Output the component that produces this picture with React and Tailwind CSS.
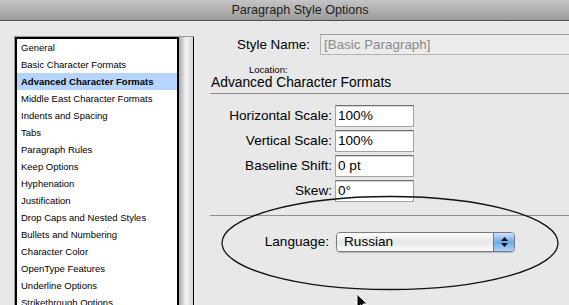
import React from 'react';

const items = [
  'General',
  'Basic Character Formats',
  'Advanced Character Formats',
  'Middle East Character Formats',
  'Indents and Spacing',
  'Tabs',
  'Paragraph Rules',
  'Keep Options',
  'Hyphenation',
  'Justification',
  'Drop Caps and Nested Styles',
  'Bullets and Numbering',
  'Character Color',
  'OpenType Features',
  'Underline Options',
  'Strikethrough Options',
];

const fields = [
  ['Horizontal Scale:', '100%'],
  ['Vertical Scale:', '100%'],
  ['Baseline Shift:', '0 pt'],
  ['Skew:', '0°'],
];

export default function App() {
  return (
    <div className="relative w-[569px] h-[305px] overflow-hidden bg-[#e8e8e8] text-black font-['Liberation_Sans',sans-serif]">
      {/* title bar */}
      <div className="h-[21px] border-b border-[#4e4e4e] bg-gradient-to-b from-[#c4c4c4] to-[#9c9c9c] pl-[31px] text-center text-[12.6px] leading-[20px] text-[#1e1e1e]">
        Paragraph Style Options
      </div>

      <div className="flex">
        {/* category list */}
        <div className="pl-[14px] pt-[15px]">
          <div className="flex border-t border-l border-[#9a9a9a] h-[300px]">
            <div className="w-[164px] border-l-2 border-r-2 border-t-2 border-black bg-white">
              {items.map((label, i) => (
                <div
                  key={label}
                  className={
                    i === 2
                      ? 'h-[17px] pl-[4px] text-[9.5px] leading-[17px] whitespace-nowrap bg-[#b5d5fd] font-bold'
                      : 'h-[17px] pl-[4px] text-[9.5px] leading-[17px] whitespace-nowrap'
                  }
                >
                  {label}
                </div>
              ))}
            </div>
            <div className="w-[14px] bg-gradient-to-r from-[#a9a9a9] via-[#f4f4f4] to-[#d4d4d4]" />
            <div className="w-px bg-black" />
          </div>
        </div>

        {/* options pane */}
        <div className="w-[400px] shrink-0">
          <div className="flex items-center mt-[13px]">
            <div className="w-[116px] text-right text-[13.4px] leading-[16px]">Style Name:</div>
            <div className="ml-[10px] h-[21px] w-[260px] border border-[#b4b4b4] border-t-[#9c9c9c] bg-[#ebebeb] pl-[3px] text-[13.4px] leading-[19px] text-[#8a8a8a]">
              [Basic Paragraph]
            </div>
          </div>
          <div className="ml-[55px] mt-[9px] h-[11px] text-[9.5px] leading-[11px]">Location:</div>
          <div className="ml-[17px] mt-[1px] h-[13px] text-[13.8px] leading-[13px]">Advanced Character Formats</div>
          <div className="ml-[16px] mt-[4px] border-t border-[#8e8e8e]" />

          <div className="mt-[11px] flex flex-col gap-[3px]">
            {fields.map(([label, value]) => (
              <div key={label} className="flex items-center">
                <div className="w-[138px] text-right text-[13.6px] leading-[16px]">{label}</div>
                <div className="ml-[3px] h-[22px] w-[79px] border border-[#a2a2a2] border-t-[#6f6f6f] bg-white pl-[2px] text-[13.6px] leading-[20px] shadow-[inset_0_1px_0_#d8d8d8]">
                  {value}
                </div>
              </div>
            ))}
          </div>

          <div className="ml-[16px] mt-[13px] border-t border-[#8e8e8e]" />

          <div className="mt-[16px] flex items-center">
            <div className="w-[135px] text-right text-[13.6px] leading-[16px]">Language:</div>
            <div className="ml-[7px] flex h-[20px] w-[179px] overflow-hidden rounded-[4px] border border-[#7b7b7b] shadow-[0_1px_1px_rgba(0,0,0,0.2)]">
              <div className="flex-1 bg-gradient-to-b from-[#ffffff] via-[#e6e6e6] to-[#fbfbfb] pl-[7px] text-[13.6px] leading-[18px]">Russian</div>
              <div className="flex w-[21px] flex-col items-center justify-center gap-[2px] border-l border-[#5a7fb0] bg-gradient-to-b from-[#cfe3fb] via-[#6ea7ee] to-[#a9d2fb]">
                <svg width="7" height="4" viewBox="0 0 7 4"><path d="M3.5 0 L7 4 L0 4 Z" fill="#111" /></svg>
                <svg width="7" height="4" viewBox="0 0 7 4"><path d="M0 0 L7 0 L3.5 4 Z" fill="#111" /></svg>
              </div>
            </div>
          </div>
        </div>
      </div>

      {/* hand-drawn annotation ellipse */}
      <svg className="absolute left-0 top-0 pointer-events-none" width="569" height="305">
        <ellipse cx="390" cy="243" rx="168" ry="46.5" fill="none" stroke="#111" strokeWidth="1.3" />
      </svg>

      {/* mouse pointer */}
      <svg className="absolute left-[356px] top-[293px]" width="14" height="20" viewBox="0 0 14 20">
        <path d="M1 1 L1 15 L4.5 11.8 L7 17.5 L9.2 16.6 L6.8 11 L11.3 11 Z" fill="#000" stroke="#fff" strokeWidth="1" strokeLinejoin="round" />
      </svg>
    </div>
  );
}
